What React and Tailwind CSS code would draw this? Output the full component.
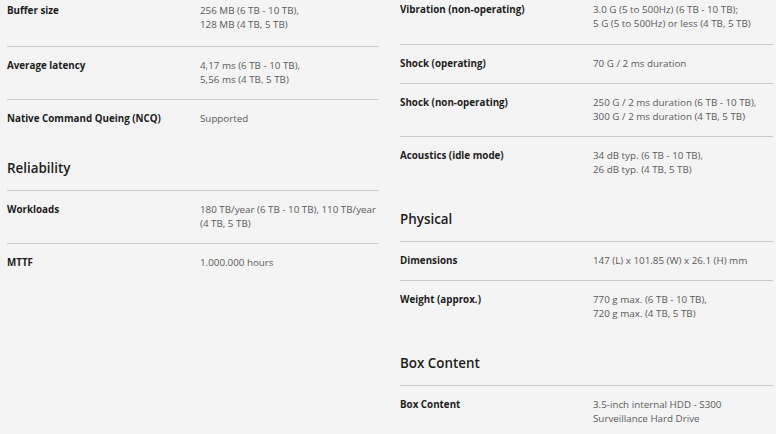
const left = [
  {
    rows: [
      { label: 'Buffer size', value: ['256 MB (6 TB - 10 TB),', '128 MB (4 TB, 5 TB)'] },
      { label: 'Average latency', value: ['4,17 ms (6 TB - 10 TB),', '5,56 ms (4 TB, 5 TB)'] },
      { label: 'Native Command Queing (NCQ)', value: ['Supported'] },
    ],
  },
  {
    title: 'Reliability',
    rows: [
      { label: 'Workloads', value: ['180 TB/year (6 TB - 10 TB), 110 TB/year', '(4 TB, 5 TB)'] },
      { label: 'MTTF', value: ['1.000.000 hours'] },
    ],
  },
];

const right = [
  {
    rows: [
      { label: 'Vibration (non-operating)', value: ['3.0 G (5 to 500Hz) (6 TB - 10 TB);', '5 G (5 to 500Hz) or less (4 TB, 5 TB)'] },
      { label: 'Shock (operating)', value: ['70 G / 2 ms duration'] },
      { label: 'Shock (non-operating)', value: ['250 G / 2 ms duration (6 TB - 10 TB),', '300 G / 2 ms duration (4 TB, 5 TB)'] },
      { label: 'Acoustics (idle mode)', value: ['34 dB typ. (6 TB - 10 TB),', '26 dB typ. (4 TB, 5 TB)'] },
    ],
  },
  {
    title: 'Physical',
    rows: [
      { label: 'Dimensions', value: ['147 (L) x 101.85 (W) x 26.1 (H) mm'] },
      { label: 'Weight (approx.)', value: ['770 g max. (6 TB - 10 TB),', '720 g max. (4 TB, 5 TB)'] },
    ],
  },
  {
    title: 'Box Content',
    rows: [
      { label: 'Box Content', value: ['3.5-inch internal HDD - S300', 'Surveillance Hard Drive'] },
    ],
  },
];

function SpecRow({ row, first, last, firstPad }) {
  return (
    <div
      className={`flex ${first ? firstPad : 'py-3'} ${last ? '' : 'border-b border-[#c9c9c9]'}`}
    >
      <div className="w-[193px] shrink-0 font-bold text-[#1c1c1c]">{row.label}</div>
      <div className="text-[#5a5a5a] whitespace-nowrap">
        {row.value.map((line, i) => (
          <div key={i}>{line}</div>
        ))}
      </div>
    </div>
  );
}

function Section({ section, isFirst, firstPad }) {
  return (
    <div>
      {section.title && (
        <h2 className="mt-[20px] pb-3 border-b border-[#c9c9c9] text-[13.4px] leading-[20px] font-semibold text-[#1c1c1c]">
          {section.title}
        </h2>
      )}
      {section.rows.map((row, i) => (
        <SpecRow
          key={row.label}
          row={row}
          first={isFirst && i === 0}
          firstPad={firstPad}
          last={i === section.rows.length - 1}
        />
      ))}
    </div>
  );
}

export default function App() {
  return (
    <div
      className="w-[776px] h-[434px] overflow-hidden bg-[#f4f4f4] text-[9.8px] leading-[14px]"
      style={{ fontFamily: '"Open Sans", "Liberation Sans", sans-serif' }}
    >
      <div className="flex pl-[7px] pr-[3px] gap-[22px]">
        <div className="w-[371px]">
          {left.map((s, i) => (
            <Section key={i} section={s} isFirst={i === 0} firstPad="pt-[4px] pb-[14px]" />
          ))}
        </div>
        <div className="w-[373px]">
          {right.map((s, i) => (
            <Section key={i} section={s} isFirst={i === 0} firstPad="pt-[3px] pb-[13px]" />
          ))}
        </div>
      </div>
    </div>
  );
}
